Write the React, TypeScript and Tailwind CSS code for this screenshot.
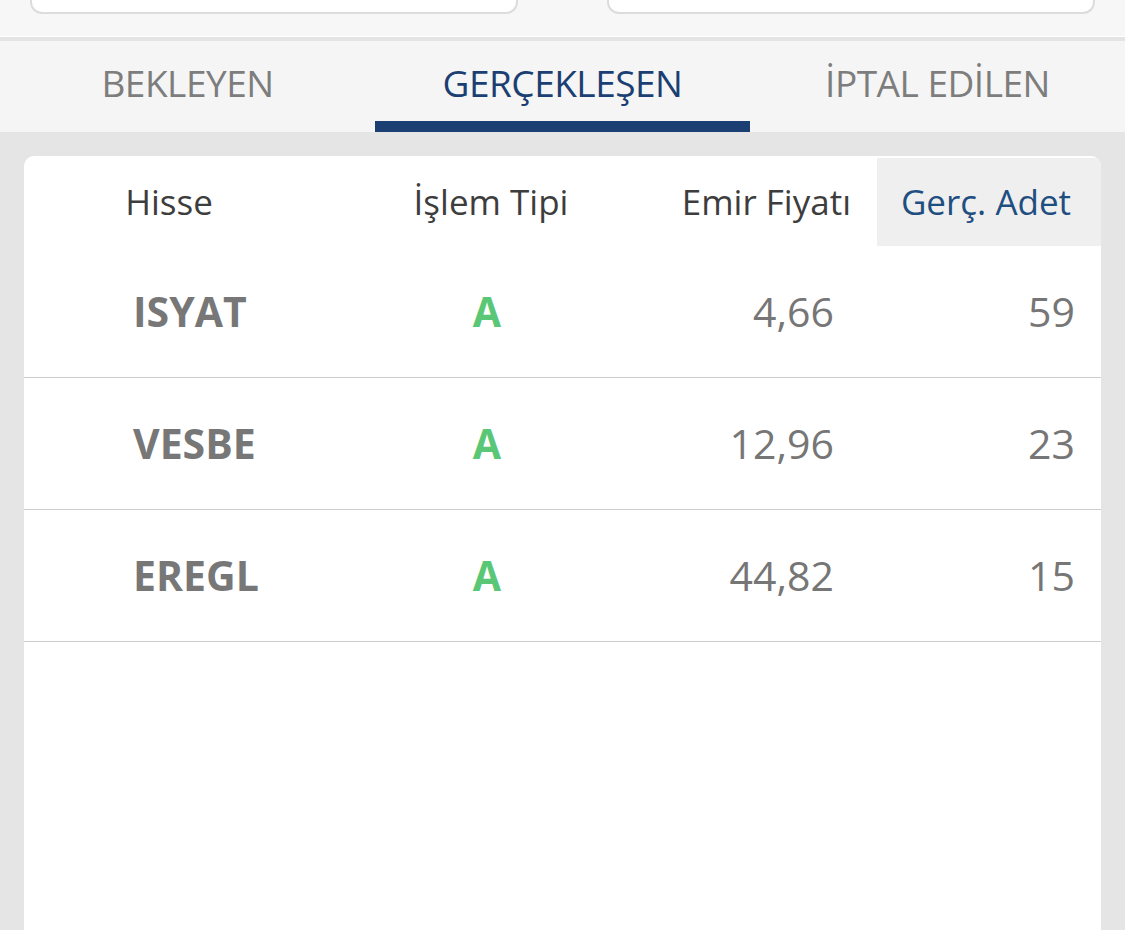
import React from 'react';

interface OrderRow {
  symbol: string;
  side: string;
  price: string;
  qty: string;
}

const ROWS: OrderRow[] = [
  { symbol: 'ISYAT', side: 'A', price: '4,66', qty: '59' },
  { symbol: 'VESBE', side: 'A', price: '12,96', qty: '23' },
  { symbol: 'EREGL', side: 'A', price: '44,82', qty: '15' },
];

const TABS = ['BEKLEYEN', 'GERÇEKLEŞEN', 'İPTAL EDİLEN'];

export default function App() {
  const active = 1;

  return (
    <div
      className="w-[1125px] h-[930px] overflow-hidden bg-[#e5e5e5] flex flex-col"
      style={{ fontFamily: '"Open Sans", "Noto Sans", sans-serif' }}
    >
      {/* top filter cards, cut off by the screenshot */}
      <div className="h-[37px] bg-[#f7f7f7] flex gap-[89px] pl-[30px] border-b border-white">
        <div className="w-[488px] h-[14px] bg-white border-2 border-t-0 border-[#dcdcdc] rounded-b-[12px]" />
        <div className="w-[488px] h-[14px] bg-white border-2 border-t-0 border-[#dcdcdc] rounded-b-[12px]" />
      </div>
      <div className="h-[4px] bg-[#e4e4e4]" />

      {/* tabs */}
      <div className="h-[91px] bg-[#f5f5f5] grid grid-cols-3">
        {TABS.map((t, i) => (
          <div key={t} className="flex flex-col">
            <div
              className={`flex-1 flex items-center justify-center pt-[3px] text-[37px] tracking-[-0.5px] ${
                i === active ? 'text-[#1b3f73]' : 'text-[#7d7d7d]'
              }`}
            >
              {t}
            </div>
            <div className={`h-[11px] ${i === active ? 'bg-[#1b3f73]' : ''}`} />
          </div>
        ))}
      </div>

      {/* table card */}
      <div className="flex-1 px-[24px] pt-[24px]">
        <div className="h-full bg-white rounded-t-[10px] overflow-hidden">
          <div className="flex h-[90px] items-center text-[35px] text-[#3d3d3d] pt-[2px]">
            <div className="w-[290px] text-center">Hisse</div>
            <div className="w-[354px] text-center">İşlem Tipi</div>
            <div className="w-[209px] text-right pr-[26px]">Emir Fiyatı</div>
            <div className="w-[224px] h-full bg-[#efefef] flex items-center justify-center pr-[6px] text-[#1f4e80]">
              Gerç. Adet
            </div>
          </div>
          {ROWS.map((r) => (
            <div
              key={r.symbol}
              className="flex h-[132px] items-center border-b border-[#cdcdcd] text-[41px]"
            >
              <div className="w-[290px] pl-[109px] font-bold text-[#777777]">{r.symbol}</div>
              <div className="w-[354px] text-center pr-[8px] font-bold text-[#5ac777]">{r.side}</div>
              <div className="w-[209px] text-right pr-[43px] text-[#767676]">{r.price}</div>
              <div className="w-[224px] text-right pr-[26px] text-[#767676]">{r.qty}</div>
            </div>
          ))}
        </div>
      </div>
    </div>
  );
}
